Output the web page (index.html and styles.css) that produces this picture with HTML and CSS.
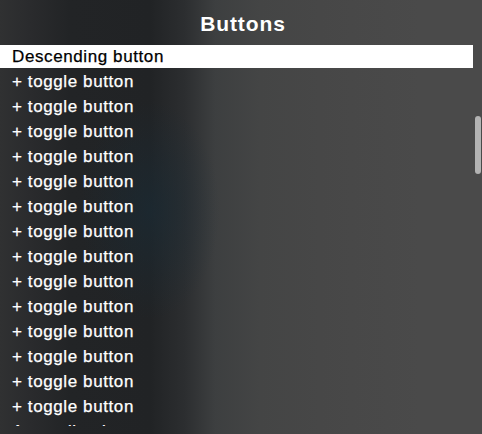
FILE: index.html
```html
<!DOCTYPE html>
<html>
<head>
<meta charset="utf-8">
<link rel="stylesheet" href="styles.css">
</head>
<body>
<div class="window">
  <header class="title">Buttons</header>
  <div class="list">
    <div class="row selected">Descending button</div>
    <div class="row">+ toggle button</div>
    <div class="row">+ toggle button</div>
    <div class="row">+ toggle button</div>
    <div class="row">+ toggle button</div>
    <div class="row">+ toggle button</div>
    <div class="row">+ toggle button</div>
    <div class="row">+ toggle button</div>
    <div class="row">+ toggle button</div>
    <div class="row">+ toggle button</div>
    <div class="row">+ toggle button</div>
    <div class="row">+ toggle button</div>
    <div class="row">+ toggle button</div>
    <div class="row">+ toggle button</div>
    <div class="row">+ toggle button</div>
    <div class="row">Ascending button</div>
  </div>
  <div class="scroller"></div>
</div>
</body>
</html>
```

FILE: styles.css
```css
html, body {
  margin: 0;
  padding: 0;
  width: 482px;
  height: 434px;
  overflow: hidden;
}

.window {
  position: relative;
  width: 482px;
  height: 434px;
  overflow: hidden;
  font-family: "Liberation Sans", Arial, sans-serif;
  color: #ffffff;
  background:
    radial-gradient(ellipse 70px 110px at 150px 210px, rgba(24, 44, 56, 0.55), rgba(24, 44, 56, 0) 100%),
    linear-gradient(to right,
      #303132 0px,
      #2a2b2d 30px,
      #222426 70px,
      #212325 150px,
      #2c2e30 185px,
      #3d3f40 215px,
      #444545 260px,
      #474747 320px,
      #4a4a4a 420px,
      #4a4a4a 482px);
}

.title {
  height: 45px;
  box-sizing: border-box;
  padding-top: 11px;
  padding-left: 4px;
  text-align: center;
  font-size: 21px;
  font-weight: bold;
  line-height: 26px;
  letter-spacing: 0.9px;
}

.list {
  height: 381px;
  overflow: hidden;
  display: flex;
  flex-direction: column;
  gap: 2px;
}

.row {
  flex: none;
  width: 473px;
  height: 23px;
  box-sizing: border-box;
  padding-left: 12px;
  font-size: 17px;
  line-height: 24px;
  letter-spacing: 0.6px;
  white-space: nowrap;
  -webkit-text-stroke: 0.25px currentColor;
}

.row.selected {
  background: #ffffff;
  color: #000000;
}

.scroller {
  position: absolute;
  left: 475px;
  top: 116px;
  width: 6px;
  height: 58px;
  border-radius: 3px;
  background: #b3b3b3;
}
```
